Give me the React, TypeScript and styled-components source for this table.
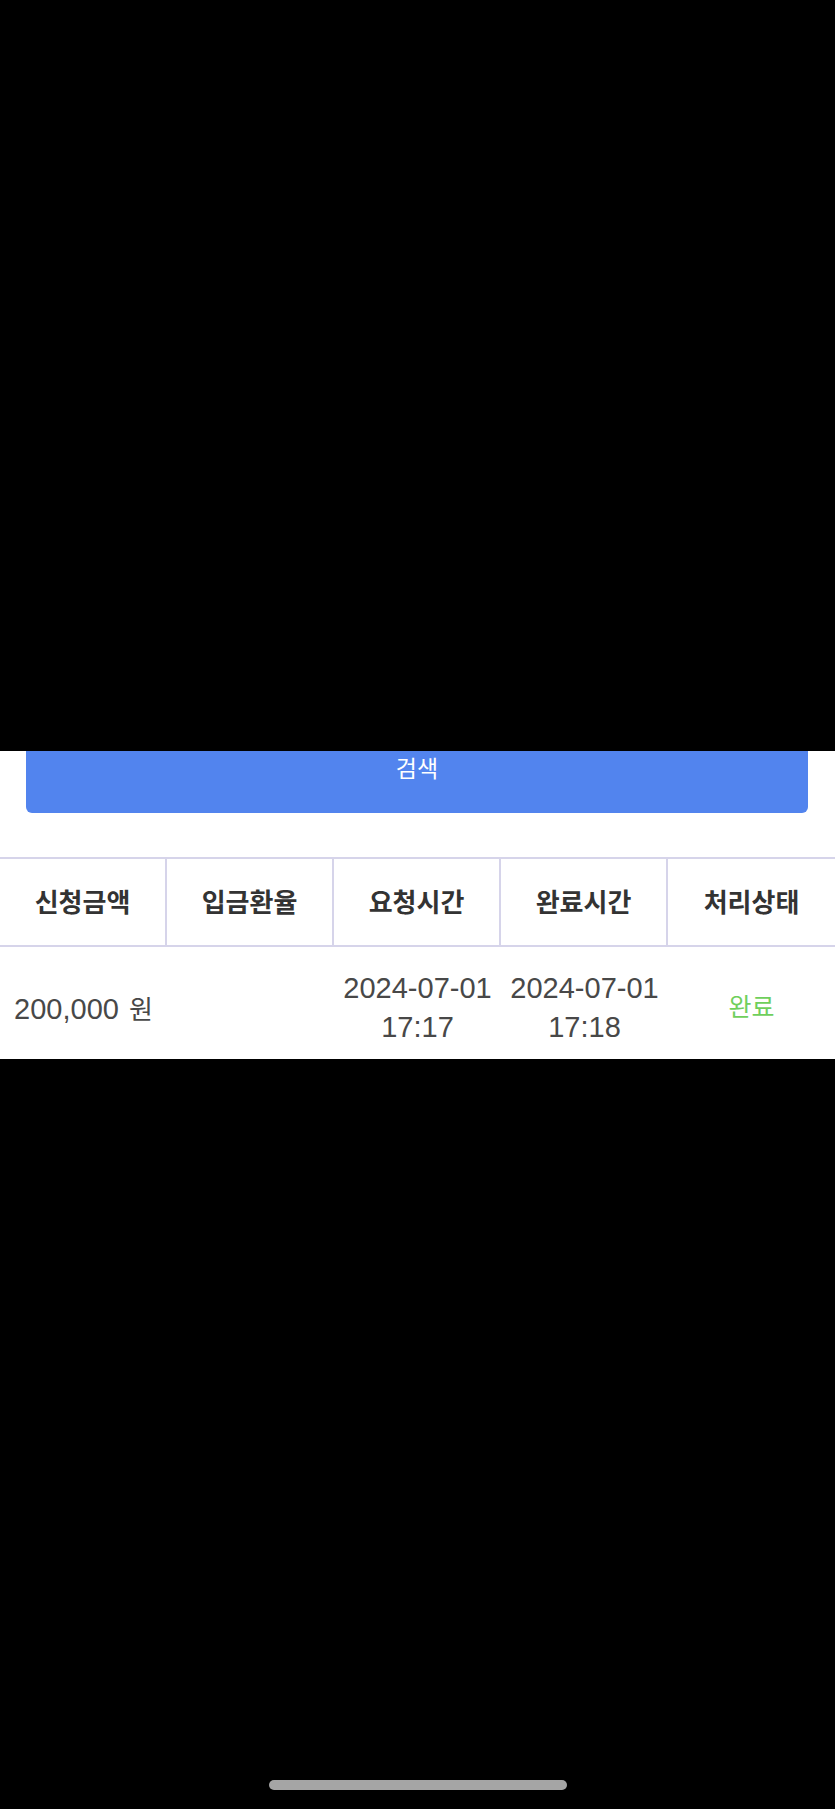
import React from 'react';
import styled, { createGlobalStyle } from 'styled-components';

const GlobalStyle = createGlobalStyle`
  html, body {
    margin: 0;
    padding: 0;
    background-color: #000000;
  }
  * {
    box-sizing: border-box;
  }
`

const Screen = styled.div`
  width: 835px;
  height: 1809px;
  display: flex;
  flex-flow: column nowrap;
  background-color: #000000;
  font-family: "Noto Sans CJK KR", "Noto Sans", sans-serif;
`

const TopShade = styled.div`
  height: 751px;
  flex: none;
`

const Panel = styled.section`
  height: 308px;
  flex: none;
  overflow: hidden;
  background-color: #ffffff;
  display: flex;
  flex-flow: column nowrap;
`

const ButtonBox = styled.div`
  padding: 0 27px 0 26px;
  margin-bottom: 44px;
`

const SearchBtn = styled.button`
  width: 100%;
  height: 62px;
  border: none;
  border-radius: 0 0 6px 6px;
  background-color: #5284ee;
  color: #ffffff;
  font-family: inherit;
  font-size: 23px;
  line-height: 24px;
  padding: 4px 0 0 0;
  display: flex;
  justify-content: center;
  align-items: flex-start;
`

const Table = styled.div`
  width: 100%;
`

const HeadRow = styled.div`
  display: grid;
  grid-template-columns: repeat(5, 1fr);
  height: 90px;
  border-top: 2px solid #d6d4ea;
  border-bottom: 2px solid #d6d4ea;
`

const HeadCell = styled.div<{ $last?: boolean }>`
  display: flex;
  justify-content: center;
  align-items: center;
  padding-bottom: 3px;
  border-right: ${props => (props.$last ? 'none' : '2px solid #d6d4ea')};
  color: #333333;
  font-size: 26px;
  font-weight: 700;
`

const BodyRow = styled.div`
  display: grid;
  grid-template-columns: repeat(5, 1fr);
  height: 122px;
`

const BodyCell = styled.div`
  display: flex;
  flex-flow: column nowrap;
  justify-content: center;
  align-items: center;
  text-align: center;
  color: #484848;
  font-family: "Liberation Sans", "Noto Sans CJK KR", sans-serif;
  font-size: 29px;
  line-height: 39px;
  white-space: nowrap;
`

const Unit = styled.span`
  font-family: "Noto Sans CJK KR", sans-serif;
  font-size: 26px;
  margin-left: 2px;
`

const Status = styled.span<{ $color: string }>`
  color: ${props => props.$color};
  font-family: "Noto Sans CJK KR", sans-serif;
  font-size: 25px;
  margin-top: -6px;
`

const Bottom = styled.div`
  flex: 1;
  display: flex;
  justify-content: center;
  align-items: flex-end;
  padding-bottom: 19px;
`

const HomeBar = styled.div`
  width: 298px;
  height: 10px;
  border-radius: 5px;
  background-color: #a5a5a5;
`

const heads = ['신청금액', '입금환율', '요청시간', '완료시간', '처리상태']

const App = () => {
  return (
    <Screen>
      <GlobalStyle />
      <TopShade />
      <Panel>
        <ButtonBox>
          <SearchBtn>검색</SearchBtn>
        </ButtonBox>
        <Table>
          <HeadRow>
            {heads.map((h, i) => (
              <HeadCell key={h} $last={i === heads.length - 1}>{h}</HeadCell>
            ))}
          </HeadRow>
          <BodyRow>
            <BodyCell>
              <span>200,000 <Unit>원</Unit></span>
            </BodyCell>
            <BodyCell></BodyCell>
            <BodyCell>
              <span>2024-07-01</span>
              <span>17:17</span>
            </BodyCell>
            <BodyCell>
              <span>2024-07-01</span>
              <span>17:18</span>
            </BodyCell>
            <BodyCell>
              <Status $color="#6fcf5c">완료</Status>
            </BodyCell>
          </BodyRow>
        </Table>
      </Panel>
      <Bottom>
        <HomeBar />
      </Bottom>
    </Screen>
  );
};

export default App;
